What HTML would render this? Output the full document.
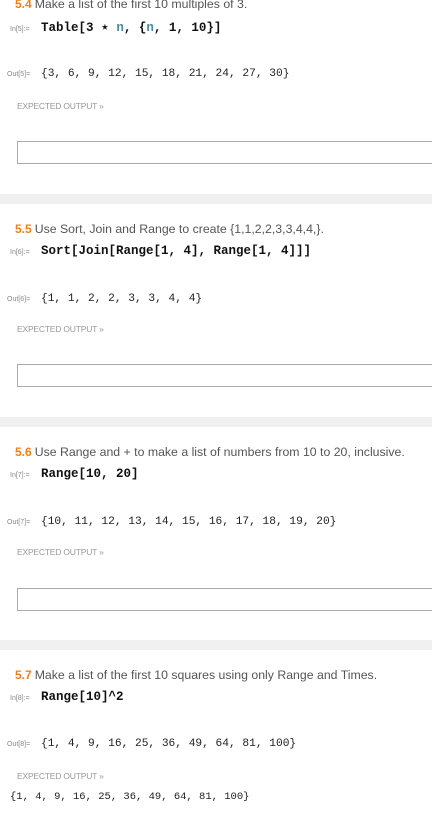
<!DOCTYPE html>
<html><head><style>
*{margin:0;padding:0;box-sizing:border-box}
body{width:432px;height:815px;background:#fff;position:relative;overflow:hidden;font-family:"Liberation Sans",sans-serif}
.a{position:absolute;white-space:nowrap;line-height:16px}
.t{left:15px;font-size:12.3px;color:#555}
.t b{color:#f57f17;font-size:12px;margin-right:3px}
.lab{display:inline-block;font-size:7px;color:#888;font-family:"Liberation Sans",sans-serif}
.in{left:10px}
.in .lab{width:31px}
.in .c{font-family:"Liberation Mono",monospace;font-weight:bold;font-size:12.5px;color:#111}
.out{left:7px}
.out .lab{width:34px}
.out .c{font-family:"Liberation Mono",monospace;font-size:11.2px;color:#222}
.ex{left:17px;font-size:8.5px;color:#999;letter-spacing:-0.2px}
.box{position:absolute;left:17px;width:420px;height:23px;border:1px solid #aaa}
.band{position:absolute;left:0;width:432px;height:10px;background:#f0f0f0}
.n{color:#4a8aa0}
</style></head><body>
<div class="a t" style="top:-4px"><b>5.4</b>Make a list of the first 10 multiples of 3.</div>
<div class="a in" style="top:19px"><span class="lab">In[5]:=</span><span class="c">Table[3 ⋆ <span class="n">n</span>, {<span class="n">n</span>, 1, 10}]</span></div>
<div class="a out" style="top:64px"><span class="lab">Out[5]=</span><span class="c">{3, 6, 9, 12, 15, 18, 21, 24, 27, 30}</span></div>
<div class="a ex" style="top:98px">EXPECTED OUTPUT »</div>
<div class="box" style="top:141px"></div>
<div class="band" style="top:194px"></div>

<div class="a t" style="top:221px"><b>5.5</b>Use Sort, Join and Range to create {1,1,2,2,3,3,4,4,}.</div>
<div class="a in" style="top:242px"><span class="lab">In[6]:=</span><span class="c">Sort[Join[Range[1, 4], Range[1, 4]]]</span></div>
<div class="a out" style="top:289px"><span class="lab">Out[6]=</span><span class="c">{1, 1, 2, 2, 3, 3, 4, 4}</span></div>
<div class="a ex" style="top:321px">EXPECTED OUTPUT »</div>
<div class="box" style="top:364px"></div>
<div class="band" style="top:417px"></div>

<div class="a t" style="top:444px"><b>5.6</b>Use Range and + to make a list of numbers from 10 to 20, inclusive.</div>
<div class="a in" style="top:465px"><span class="lab">In[7]:=</span><span class="c">Range[10, 20]</span></div>
<div class="a out" style="top:512px"><span class="lab">Out[7]=</span><span class="c">{10, 11, 12, 13, 14, 15, 16, 17, 18, 19, 20}</span></div>
<div class="a ex" style="top:544px">EXPECTED OUTPUT »</div>
<div class="box" style="top:588px"></div>
<div class="band" style="top:640px"></div>

<div class="a t" style="top:667px"><b>5.7</b>Make a list of the first 10 squares using only Range and Times.</div>
<div class="a in" style="top:688px"><span class="lab">In[8]:=</span><span class="c">Range[10]^2</span></div>
<div class="a out" style="top:734px"><span class="lab">Out[8]=</span><span class="c">{1, 4, 9, 16, 25, 36, 49, 64, 81, 100}</span></div>
<div class="a ex" style="top:768px">EXPECTED OUTPUT »</div>
<div class="a" style="top:789px;left:10px;font-family:'Liberation Mono',monospace;font-size:10.5px;color:#222">{1, 4, 9, 16, 25, 36, 49, 64, 81, 100}</div>
</body></html>
